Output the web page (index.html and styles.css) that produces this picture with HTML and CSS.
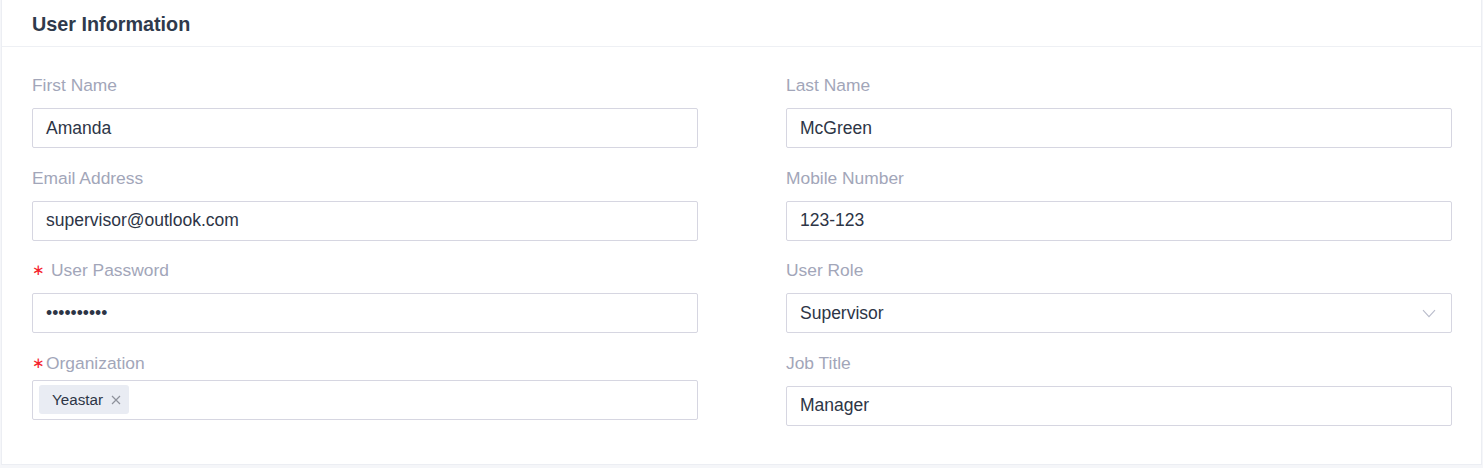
FILE: index.html
```html
<!DOCTYPE html>
<html>
<head>
<meta charset="utf-8">
<link rel="stylesheet" href="styles.css">
</head>
<body>
<div class="page">
  <section class="card">
    <header class="card-header"><h2 class="card-title">User Information</h2></header>
    <div class="card-body">
      <div class="form-grid">
        <div class="field">
          <div class="label">First Name</div>
          <div class="input">Amanda</div>
        </div>
        <div class="field">
          <div class="label">Last Name</div>
          <div class="input">McGreen</div>
        </div>
        <div class="field">
          <div class="label">Email Address</div>
          <div class="input">supervisor@outlook.com</div>
        </div>
        <div class="field">
          <div class="label">Mobile Number</div>
          <div class="input">123-123</div>
        </div>
        <div class="field">
          <div class="label"><span class="req req-wide">∗</span>User Password</div>
          <div class="input input-pwd">••••••••••</div>
        </div>
        <div class="field">
          <div class="label">User Role</div>
          <div class="input input-select select-shift">Supervisor
            <svg class="chev" width="14" height="9" viewBox="0 0 14 9"><path d="M1 1.2 L7 7.6 L13 1.2" fill="none" stroke="#b9bccb" stroke-width="1.1"/></svg>
          </div>
        </div>
        <div class="field">
          <div class="label label-tight"><span class="req">∗</span>Organization</div>
          <div class="input input-tags"><span class="tag">Yeastar<svg class="tag-x" width="10" height="10" viewBox="0 0 10 10"><path d="M1 1 L9 9 M9 1 L1 9" stroke="#8e919b" stroke-width="1.2" fill="none"/></svg></span></div>
        </div>
        <div class="field">
          <div class="label">Job Title</div>
          <div class="input">Manager</div>
        </div>
      </div>
    </div>
  </section>
</div>
</body>
</html>
```
FILE: styles.css
```css
* { box-sizing: border-box; }
html, body { margin: 0; padding: 0; background: #f5f6f9; }
body { font-family: "Liberation Sans", Arial, sans-serif; }
.page { padding: 0 1px 2px 1px; }
.card {
  background: #fff;
  border: 1px solid #eceef3;
  border-top: none;
}
.card-header {
  height: 47px;
  border-bottom: 1px solid #eef0f4;
  padding: 2px 30px 0;
  display: flex;
  align-items: center;
}
.card-title {
  margin: 0;
  font-size: 19.8px;
  font-weight: bold;
  color: #2f3a4c;
}
.card-body { padding: 27px 29px 38px 30px; }
.form-grid {
  display: grid;
  grid-template-columns: 666px 666px;
  column-gap: 88px;
  row-gap: 18.5px;
}
.label {
  font-size: 17.4px;
  line-height: 22px;
  color: #a2a6b9;
  margin-bottom: 12px;
  display: flex;
  align-items: center;
}
.label-tight { margin-bottom: 6px; }
.req {
  color: #f5222d;
  margin-right: 6px;
  font-size: 15px;
  width: 8px;
  display: inline-block;
  text-align: center;
  font-family: "DejaVu Sans", sans-serif;
}
.req-wide { margin-right: 11px; }
.input {
  height: 40px;
  border: 1px solid #d6d6e1;
  border-radius: 2px;
  padding: 0 13px;
  font-size: 17.5px;
  color: #2d3546;
  display: flex;
  align-items: center;
}
.input-select { justify-content: space-between; padding-right: 15px; }
.select-shift { margin-top: 1px; }
.input-tags { padding: 0 6px; }
.tag {
  display: inline-flex;
  align-items: center;
  height: 29px;
  padding: 0 8px 0 13px;
  background: #e9ecf3;
  border-radius: 3px;
  font-size: 15.2px;
  color: #2d3546;
}
.tag-x { margin-left: 8px; }
```
